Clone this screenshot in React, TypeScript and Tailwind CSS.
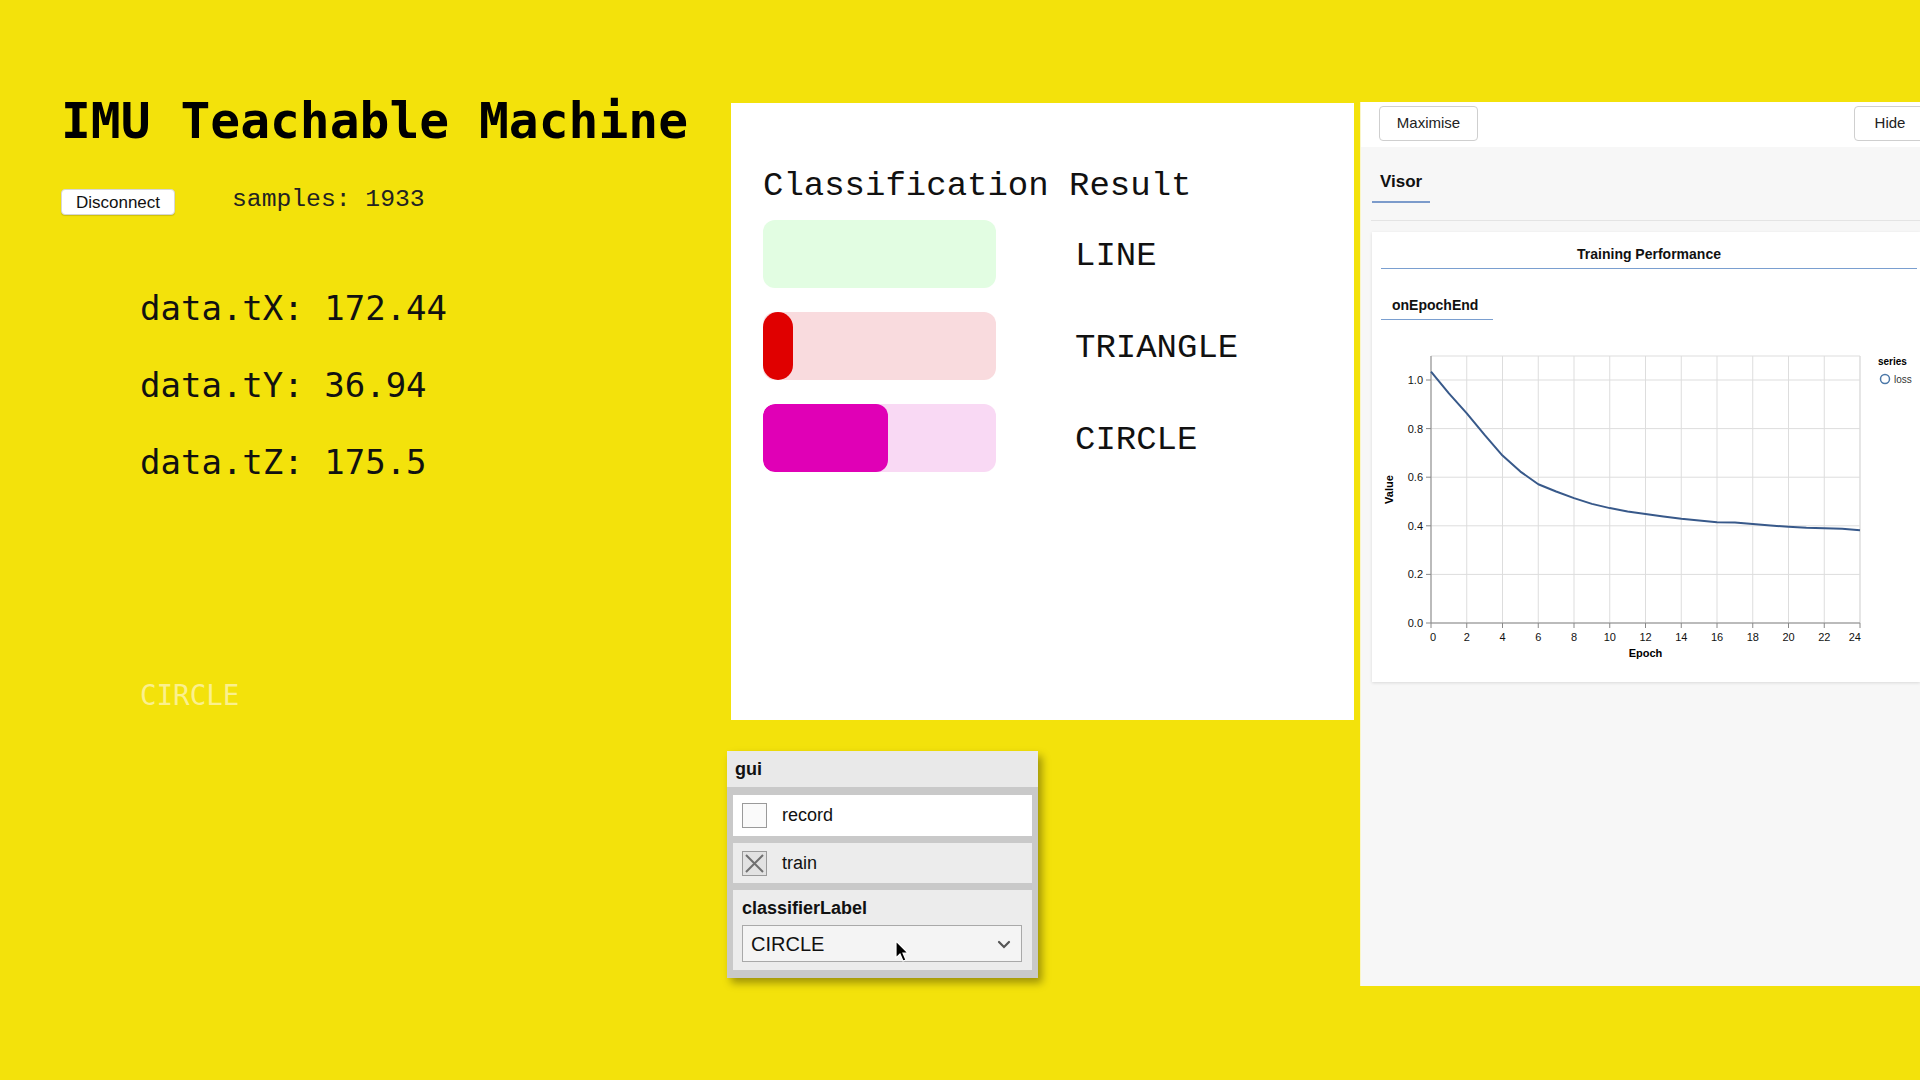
import React from "react";

const mono = { fontFamily: '"DejaVu Sans Mono", monospace' };
const thinMono = { fontFamily: '"Liberation Mono", monospace' };
const sans = { fontFamily: '"Liberation Sans", Arial, sans-serif' };

const loss = [
  1.034, 0.945, 0.863, 0.774, 0.689, 0.623, 0.571, 0.541, 0.514, 0.49, 0.473, 0.459, 0.448,
  0.438, 0.429, 0.422, 0.415, 0.414, 0.407, 0.401, 0.396, 0.392, 0.39, 0.388, 0.382,
];

const results = [
  { label: "LINE", track: "bg-[#e2fde2]", fill: "", width: 0 },
  { label: "TRIANGLE", track: "bg-[#f9dbde]", fill: "bg-[#e00000] rounded-[15px]", width: 30 },
  { label: "CIRCLE", track: "bg-[#f9d9f4]", fill: "bg-[#e000b6] rounded-[12px]", width: 125 },
];

function LossChart() {
  const left = 59;
  const right = 488;
  const bottom = 294;
  const xs = (e: number) => left + (e * (right - left)) / 24;
  const ys = (v: number) => bottom - v * 243;
  const xTicks = Array.from({ length: 13 }, (_, i) => i * 2);
  const yTicks = [0, 0.2, 0.4, 0.6, 0.8, 1.0];
  const d = loss.map((v, i) => `${i === 0 ? "M" : "L"}${xs(i).toFixed(1)},${ys(v).toFixed(1)}`).join(" ");

  return (
    <svg width="548" height="340" className="block" style={sans}>
      {xTicks.map((t) => (
        <line key={"gx" + t} x1={xs(t)} x2={xs(t)} y1={27} y2={bottom} stroke="#dddddd" strokeWidth="1" />
      ))}
      {yTicks.map((t) => (
        <line key={"gy" + t} x1={left} x2={right} y1={ys(t)} y2={ys(t)} stroke="#dddddd" strokeWidth="1" />
      ))}
      <line x1={left} x2={right} y1={27} y2={27} stroke="#dddddd" />
      <line x1={right} x2={right} y1={27} y2={bottom} stroke="#dddddd" />
      <line x1={left} x2={right} y1={bottom} y2={bottom} stroke="#888888" />
      <line x1={left} x2={left} y1={27} y2={bottom} stroke="#888888" />
      {xTicks.map((t) => (
        <g key={"tx" + t}>
          <line x1={xs(t)} x2={xs(t)} y1={bottom} y2={bottom + 5} stroke="#888888" />
          <text
            x={t === 0 ? xs(t) - 1 : t === 24 ? xs(t) + 1 : xs(t)}
            y={bottom + 18}
            fontSize="11"
            fill="#111"
            textAnchor={t === 0 ? "start" : t === 24 ? "end" : "middle"}
          >
            {t}
          </text>
        </g>
      ))}
      {yTicks.map((t) => (
        <g key={"ty" + t}>
          <line x1={left - 5} x2={left} y1={ys(t)} y2={ys(t)} stroke="#888888" />
          <text x={left - 8} y={ys(t) + 4} fontSize="11" fill="#111" textAnchor="end">
            {t.toFixed(1)}
          </text>
        </g>
      ))}
      <path d={d} fill="none" stroke="#38598a" strokeWidth="2" strokeLinejoin="round" />
      <text x={(left + right) / 2} y={328} fontSize="11" fontWeight="bold" fill="#000" textAnchor="middle">
        Epoch
      </text>
      <text
        x={0}
        y={0}
        fontSize="11"
        fontWeight="bold"
        fill="#000"
        textAnchor="middle"
        transform={`translate(21 ${(27 + bottom) / 2}) rotate(-90)`}
      >
        Value
      </text>
      <text x={506} y={36} fontSize="10" fontWeight="bold" fill="#000">
        series
      </text>
      <circle cx={513} cy={50} r={4.5} fill="none" stroke="#4c78a8" strokeWidth="1.5" />
      <text x={522} y={54} fontSize="10" fill="#333">
        loss
      </text>
    </svg>
  );
}

export default function App() {
  return (
    <div className="relative flex w-[1920px] min-h-[1080px] overflow-hidden bg-[#f3e20b]">
      {/* left column: title and sensor data */}
      <div className="w-[731px] shrink-0 pl-[61px] pt-[96px]">
        <h1 className="text-[49.6px] leading-[50px] font-bold text-black" style={mono}>
          IMU Teachable Machine
        </h1>
        <div className="mt-[43px] flex items-start">
          <button
            className="h-[26px] w-[114px] rounded-[4px] border border-[#d6d6d6] bg-white text-[17px] leading-none text-[#111] shadow-[0_1px_1px_rgba(0,0,0,0.15)]"
            style={sans}
          >
            Disconnect
          </button>
          <span className="ml-[57px] -mt-[2px] text-[24.7px] leading-[25px] text-[#222]" style={thinMono}>
            samples: 1933
          </span>
        </div>
        <div className="mt-[55px] ml-[79px] text-[34px] leading-[77px] text-[#111]" style={mono}>
          <div>data.tX: 172.44</div>
          <div>data.tY: 36.94</div>
          <div>data.tZ: 175.5</div>
        </div>
        <div className="mt-[180px] ml-[79px] text-[27.5px] leading-[28px] text-[#fbf08e]" style={mono}>
          CIRCLE
        </div>
      </div>

      {/* middle column: classification + gui */}
      <div className="w-[623px] shrink-0 pt-[103px] flex flex-col">
        <div className="h-[617px] bg-white pl-[32px] pt-[66px]">
          <div className="text-[34px] leading-[34px] text-[#111]" style={thinMono}>
            Classification Result
          </div>
          <div className="mt-[17px] flex flex-col gap-[24px]">
            {results.map((r) => (
              <div key={r.label} className="flex items-center">
                <div className={`h-[68px] w-[233px] rounded-[12px] overflow-hidden flex ${r.track}`}>
                  {r.width > 0 && <div className={`h-full ${r.fill}`} style={{ width: r.width }} />}
                </div>
                <div className="ml-[79px] mt-[3px] text-[34px] leading-[34px] text-[#111]" style={thinMono}>
                  {r.label}
                </div>
              </div>
            ))}
          </div>
        </div>

        <div
          className="relative mt-[31px] -ml-[4px] w-[311px] bg-[#c9c9c9] shadow-[4px_5px_8px_rgba(0,0,0,0.35)]"
          style={sans}
        >
          <div className="h-[36px] bg-[#e9e9e9] pl-[8px] flex items-center text-[18px] font-bold text-[#111]">
            gui
          </div>
          <div className="flex flex-col gap-[7px] px-[6px] pt-[8px] pb-[8px]">
            <div className="h-[41px] bg-white flex items-center pl-[9px]">
              <div className="h-[25px] w-[25px] border border-[#9a9a9a] bg-[#fafafa]" />
              <span className="ml-[15px] text-[18px] text-[#111]">record</span>
            </div>
            <div className="h-[40px] bg-[#ececec] flex items-center pl-[9px]">
              <div className="h-[25px] w-[25px] border border-[#9a9a9a] bg-[#e2e2e2]">
                <svg width="23" height="23" viewBox="0 0 23 23">
                  <path d="M3 3 L20 20 M20 3 L3 20" stroke="#707070" strokeWidth="2" />
                </svg>
              </div>
              <span className="ml-[15px] text-[18px] text-[#111]">train</span>
            </div>
            <div className="h-[80px] bg-[#ececec] px-[9px] pt-[8px]">
              <div className="text-[18px] leading-[20px] font-bold text-[#111]">classifierLabel</div>
              <div className="relative mt-[7px] h-[37px] w-[280px] border border-[#a9a9a9] bg-[#f4f4f4] flex items-center pl-[8px] text-[20px] text-[#111]">
                CIRCLE
                <svg className="absolute right-[10px] top-[14px]" width="14" height="9" viewBox="0 0 14 9">
                  <path d="M2 2 L7 7 L12 2" fill="none" stroke="#555" strokeWidth="2.2" strokeLinecap="round" />
                </svg>
                <svg className="absolute left-[152px] top-[14px]" width="16" height="24" viewBox="0 0 16 24">
                  <path d="M1 1 L1 18 L5 14 L8 21 L11 20 L8 13 L13 13 Z" fill="#000" stroke="#fff" strokeWidth="1.2" />
                </svg>
              </div>
            </div>
          </div>
        </div>
      </div>

      {/* right column: tfjs visor */}
      <div
        className="ml-[6px] mt-[102px] h-[884px] flex-1 overflow-hidden bg-[#f7f7f7] border-l border-[#fbf6c8] flex flex-col"
        style={sans}
      >
        <div className="h-[45px] bg-white flex items-start justify-between pl-[18px] pt-[4px]">
          <button className="h-[35px] w-[99px] rounded-[4px] border border-[#cfcfcf] bg-white text-[15px] text-[#222]">
            Maximise
          </button>
          <button className="h-[35px] w-[72px] -mr-[6px] rounded-[4px] border border-[#cfcfcf] bg-white text-[15px] text-[#222]">
            Hide
          </button>
        </div>
        <div className="pl-[11px] pt-[23px]">
          <div className="inline-block w-[58px] border-b-2 border-[#7c9bcb] pl-[8px] pb-[9px] text-[17px] leading-[20px] font-bold text-[#111]">
            Visor
          </div>
        </div>
        <div className="mt-[17px] ml-[10px] h-px bg-[#e4e4e4]" />
        <div className="mt-[11px] ml-[11px] h-[450px] bg-white shadow-[0_1px_3px_rgba(0,0,0,0.12)]">
          <div className="ml-[9px] mr-[3px] pt-[13px] pb-[5px] border-b-[1.5px] border-[#7a9fd0] text-center text-[14px] leading-[18px] font-bold text-[#111]">
            Training Performance
          </div>
          <div className="mt-[27px] ml-[9px] inline-block w-[112px] border-b-[1.5px] border-[#7a9fd0] pl-[11px] pb-[5px] text-[14px] leading-[18px] font-bold text-[#111]">
            onEpochEnd
          </div>
          <div className="mt-[9px]">
            <LossChart />
          </div>
        </div>
      </div>
    </div>
  );
}
